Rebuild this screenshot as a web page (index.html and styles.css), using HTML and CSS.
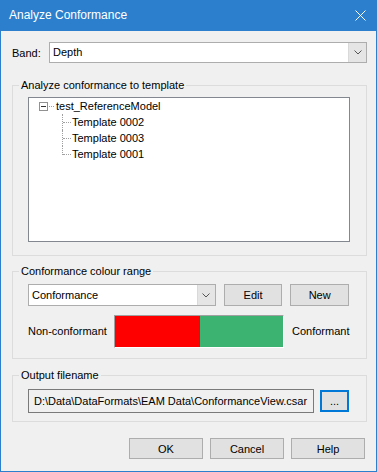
FILE: index.html
```html
<!DOCTYPE html>
<html lang="en">
<head>
  <meta charset="UTF-8">
  <title>Analyze Conformance</title>
  <link rel="stylesheet" href="styles.css">
</head>
<body>
  <div class="dialog">
    <div class="titlebar">
      <span class="title">Analyze Conformance</span>
      <svg class="close" viewBox="0 0 11 11" width="11" height="11">
        <path d="M0.5 0.5 L10.5 10.5 M10.5 0.5 L0.5 10.5" stroke="#fff" stroke-width="1" fill="none" />
      </svg>
    </div>

    <div class="content">
      <div class="band-row">
        <span class="band-label">Band:</span>
        <div class="combo combo-band">
          <span class="combo-text">Depth</span>
          <span class="combo-btn">
            <svg viewBox="0 0 8 5" width="8" height="5"><path d="M0.5 0.5 L4 4 L7.5 0.5" stroke="#555" stroke-width="1" fill="none" /></svg>
          </span>
        </div>
      </div>

      <div class="group group-template">
        <div class="legend">Analyze conformance to template</div>
        <div class="tree">
          <div class="tree-row root">
            <span class="expander"><span class="minus"></span></span>
            <span class="root-dots"></span>
            <span class="node">test_ReferenceModel</span>
          </div>
          <div class="tree-row child">
            <span class="branch"></span>
            <span class="node">Template 0002</span>
          </div>
          <div class="tree-row child">
            <span class="branch"></span>
            <span class="node">Template 0003</span>
          </div>
          <div class="tree-row child last">
            <span class="branch"></span>
            <span class="node">Template 0001</span>
          </div>
        </div>
      </div>

      <div class="group group-colour">
        <div class="legend">Conformance colour range</div>
        <div class="colour-row">
          <div class="combo combo-colour">
            <span class="combo-text">Conformance</span>
            <span class="combo-btn">
              <svg viewBox="0 0 8 5" width="8" height="5"><path d="M0.5 0.5 L4 4 L7.5 0.5" stroke="#555" stroke-width="1" fill="none" /></svg>
            </span>
          </div>
          <button class="btn btn-small">Edit</button>
          <button class="btn btn-small">New</button>
        </div>
        <div class="range-row">
          <span class="range-label range-low">Non-conformant</span>
          <div class="range-bar">
            <span class="range-red"></span>
            <span class="range-green"></span>
          </div>
          <span class="range-label">Conformant</span>
        </div>
      </div>

      <div class="group group-output">
        <div class="legend">Output filename</div>
        <div class="output-row">
          <div class="textbox">D:\Data\DataFormats\EAM Data\ConformanceView.csar</div>
          <button class="btn btn-browse">...</button>
        </div>
      </div>

      <div class="actions">
        <button class="btn btn-dialog">OK</button>
        <button class="btn btn-dialog">Cancel</button>
        <button class="btn btn-dialog">Help</button>
      </div>
    </div>
  </div>
</body>
</html>
```

FILE: styles.css
```css
body {
  margin: 0;
  font-family: 'Liberation Sans', Arial, sans-serif;
  font-size: 11px;
  color: #000;
  background: #f0f0f0;
}

.dialog {
  width: 377px;
  height: 472px;
  box-sizing: border-box;
  border: 1px solid #2b7fcc;
  border-top: none;
  background: #f0f0f0;
  display: flex;
  flex-direction: column;
}

.titlebar {
  height: 31px;
  margin: 0 -1px;
  background: #2b7fcc;
  color: #fff;
  display: flex;
  align-items: center;
  justify-content: space-between;
  padding: 0 11px 0 9px;
  font-size: 12px;
}

.title {
  line-height: 15px;
  padding-bottom: 1px;
}

.close {
  display: block;
}

.content {
  padding: 11px 9px 0 10px;
  display: flex;
  flex-direction: column;
}

/* band */
.band-row {
  display: flex;
  align-items: center;
  height: 21px;
}

.band-label {
  width: 38px;
  padding-left: 1px;
  box-sizing: border-box;
}

.combo {
  display: flex;
  height: 21px;
  box-sizing: border-box;
  border: 1px solid #adadad;
  background: #fff;
}

.combo-band {
  flex: 1;
}

.combo-text {
  flex: 1;
  padding-left: 3px;
  line-height: 19px;
}

.combo-btn {
  width: 17px;
  border-left: 1px solid #d9d9d9;
  background: #e5e5e5;
  display: flex;
  align-items: center;
  justify-content: center;
}

.combo-btn svg {
  display: block;
}

/* groups */
.group {
  margin-left: 1px;
  border: 1px solid #dcdcdc;
  display: flex;
  flex-direction: column;
}

.legend {
  align-self: flex-start;
  margin: -8px 0 0 -9px;
  padding: 0 2px;
  line-height: 15px;
  background: #f0f0f0;
}

.group-template {
  margin-top: 22px;
  padding: 0 16px 13px 15px;
}

.tree {
  margin-top: 4px;
  height: 145px;
  box-sizing: border-box;
  border: 1px solid #828790;
  background: #fff;
  padding: 0 0 0 10px;
}

.tree-row {
  height: 16px;
  display: flex;
  align-items: center;
  line-height: 16px;
}

.expander {
  width: 9px;
  height: 9px;
  box-sizing: border-box;
  border: 1px solid #919191;
  display: flex;
  align-items: center;
  justify-content: center;
}

.minus {
  width: 5px;
  height: 1px;
  background: #333;
}

.root-dots {
  width: 5px;
  margin: 0 1px 0 1px;
  border-top: 1px dotted #a0a0a0;
}

.node {
  padding-left: 1px;
}

.child {
  padding-left: 23px;
}

.branch {
  position: relative;
  width: 9px;
  height: 16px;
}

.branch::before {
  content: "";
  position: absolute;
  left: 0;
  top: 0;
  bottom: 0;
  border-left: 1px dotted #a0a0a0;
}

.last .branch::before {
  bottom: 7px;
}

.branch::after {
  content: "";
  position: absolute;
  left: 1px;
  right: 0;
  top: 8px;
  border-top: 1px dotted #a0a0a0;
}

/* colour range */
.group-colour {
  margin-top: 15px;
  padding: 0 17px 10px 15px;
}

.colour-row {
  margin-top: 5px;
  display: flex;
  align-items: center;
  gap: 8px;
}

.combo-colour {
  width: 189px;
  height: 22px;
}

.combo-colour .combo-text {
  line-height: 20px;
}

.btn {
  font: inherit;
  color: #000;
  background: #e1e1e1;
  border: 1px solid #adadad;
  box-sizing: border-box;
  padding: 0;
}

.btn-small {
  width: 59px;
  height: 22px;
}

.range-row {
  margin-top: 9px;
  display: flex;
  align-items: center;
}

.range-label {
  line-height: 15px;
  white-space: nowrap;
}

.range-low {
  width: 86px;
  flex-shrink: 0;
}

.range-bar {
  display: flex;
  flex-shrink: 0;
  width: 170px;
  height: 33px;
  box-sizing: border-box;
  margin-right: 8px;
  border-top: 1px solid #a0a0a0;
  border-left: 1px solid #a0a0a0;
  border-right: 1px solid #fff;
  border-bottom: 1px solid #fff;
}

.range-red {
  width: 85px;
  background: #ff0000;
}

.range-green {
  flex: 1;
  background: #3cb371;
}

/* output */
.group-output {
  margin-top: 16px;
  padding: 0 17px 8px 15px;
}

.output-row {
  margin-top: 6px;
  display: flex;
  align-items: center;
  gap: 6px;
}

.textbox {
  width: 286px;
  height: 24px;
  box-sizing: border-box;
  border: 1px solid #7a7a7a;
  padding-left: 5px;
  line-height: 22px;
  white-space: nowrap;
  overflow: hidden;
}

.btn-browse {
  width: 29px;
  height: 22px;
  border: 2px solid #0078d7;
}

/* dialog buttons */
.actions {
  margin-top: 16px;
  display: flex;
  justify-content: flex-end;
  gap: 7px;
  padding-right: 2px;
}

.btn-dialog {
  width: 74px;
  height: 21px;
}
```
